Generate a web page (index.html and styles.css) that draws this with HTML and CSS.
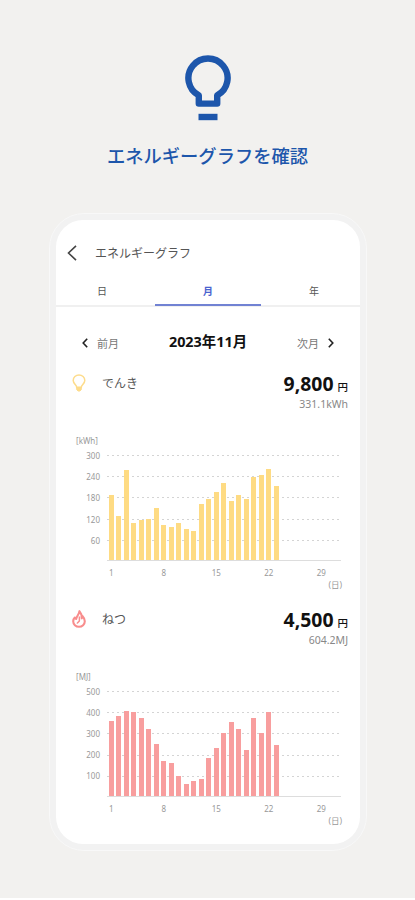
FILE: index.html
```
<!doctype html>
<html lang="ja">
<head>
	<meta charset="utf-8">
	<meta name="viewport" content="width=device-width, initial-scale=1.0">
	<title>エネルギーグラフ</title>
	<link rel="stylesheet" href="styles.css">
</head>
<body>
	<div class="hero">
		<svg class="hero-icon" width="46" height="66" viewBox="0 0 46 66" fill="none" stroke="currentColor" stroke-width="6.4">
			<path d="M13.8 48.6V40.4A19.6 19.6 0 1 1 32.2 40.4V48.6Z" stroke-linejoin="round"/>
			<path d="M13.5 62H32.5"/>
		</svg>
		<h1>エネルギーグラフを確認</h1>
	</div>

	<div class="phone">
		<div class="screen">
			<header class="bar">
				<svg width="10" height="16" viewBox="0 0 10 16" fill="none" stroke="#444" stroke-width="1.6"><path d="M9 .8 1.5 8 9 15.2"/></svg>
				<span>エネルギーグラフ</span>
			</header>
			<nav class="tabs">
				<span class="tab">日</span>
				<span class="tab tab-active">月</span>
				<span class="tab">年</span>
			</nav>

			<div class="month">
				<svg width="6" height="10" viewBox="0 0 6 10" fill="none" stroke="#222" stroke-width="1.6"><path d="M5.2 .8 1.2 5 5.2 9.2"/></svg>
				<span class="month-link">前月</span>
				<strong>2023年11月</strong>
				<span class="month-link">次月</span>
				<svg width="6" height="10" viewBox="0 0 6 10" fill="none" stroke="#222" stroke-width="1.6"><path d="M.8 .8 4.8 5 .8 9.2"/></svg>
			</div>

			<section class="energy power">
				<div class="summary">
					<svg class="icon" width="14" height="18" viewBox="0 0 14 18" fill="none" stroke="#fddc8c" stroke-width="1.5">
						<path d="M4.7 13.2C4.7 11 1.2 9.7 1.2 6.5A5.7 5.5 0 0 1 12.8 6.5C12.8 9.7 9.3 11 9.3 13.2Z"/>
						<path d="M4.7 13V15.5L6 17H8L9.3 15.5V13" fill="#fddc8c" stroke-width="1"/>
					</svg>
					<h2>でんき</h2>
					<div class="amount">
						<p class="price">9,800<small>円</small></p>
						<p class="usage">331.1kWh</p>
					</div>
				</div>
				<div class="unit">[kWh]</div>
				<div class="chart">
					<div class="scale"><span>300</span><span>240</span><span>180</span><span>120</span><span>60</span></div>
					<div class="plot">
						<i style="height:65px"></i><i style="height:44px"></i><i style="height:90px"></i><i style="height:37px"></i><i style="height:40px"></i><i style="height:41px"></i><i style="height:52px"></i>
						<i style="height:35px"></i><i style="height:33px"></i><i style="height:37px"></i><i style="height:31px"></i><i style="height:29px"></i><i style="height:56px"></i><i style="height:61px"></i>
						<i style="height:68px"></i><i style="height:77px"></i><i style="height:59px"></i><i style="height:65px"></i><i style="height:61px"></i><i style="height:83px"></i><i style="height:85px"></i>
						<i style="height:91px"></i><i style="height:74px"></i>
					</div>
				</div>
				<div class="days"><span>1</span><span>8</span><span>15</span><span>22</span><span>29</span></div>
				<div class="day-unit">(日)</div>
			</section>

			<section class="energy heat">
				<div class="summary">
					<svg class="icon" width="14" height="18" viewBox="0 0 14 18" fill="none" stroke="#f88d8d" stroke-linejoin="round">
						<path d="M7.4 1.2C7.4 4.2 4.4 6 4.2 9L2.8 7.6C1.7 8.7 1.2 9.9 1.2 11.3A5.8 5.5 0 0 0 12.8 11.3C12.8 9.3 11.9 7.6 10.6 6.2L9.7 8.3C9.9 5.5 9 3 7.4 1.2Z" stroke-width="2.1"/>
						<path d="M7.4 6.5V10.5C7.4 12.4 5.4 12 5.2 13.6" stroke-width="1.5"/>
					</svg>
					<h2>ねつ</h2>
					<div class="amount">
						<p class="price">4,500<small>円</small></p>
						<p class="usage">604.2MJ</p>
					</div>
				</div>
				<div class="unit">[MJ]</div>
				<div class="chart">
					<div class="scale"><span>500</span><span>400</span><span>300</span><span>200</span><span>100</span></div>
					<div class="plot">
						<i style="height:75px"></i><i style="height:80px"></i><i style="height:85px"></i><i style="height:84px"></i><i style="height:78px"></i><i style="height:67px"></i><i style="height:52px"></i>
						<i style="height:35px"></i><i style="height:33px"></i><i style="height:20px"></i><i style="height:12px"></i><i style="height:15px"></i><i style="height:17px"></i><i style="height:38px"></i>
						<i style="height:48px"></i><i style="height:63px"></i><i style="height:74px"></i><i style="height:67px"></i><i style="height:46px"></i><i style="height:78px"></i><i style="height:63px"></i>
						<i style="height:84px"></i><i style="height:51px"></i>
					</div>
				</div>
				<div class="days"><span>1</span><span>8</span><span>15</span><span>22</span><span>29</span></div>
				<div class="day-unit">(日)</div>
			</section>
		</div>
	</div>
</body>
</html>
```
FILE: styles.css
```
* { box-sizing: border-box; }

:root {
	--blue: #1d56ab;
	--blue-tab: #4a63cf;
	--page: #f2f1ef;
}

html {
	background: #fff;
}

body {
	height: 898px;
	margin: 0;
	padding-top: 55px;
	overflow: hidden;
	background: var(--page);
	color: #111;
	font-family: "Noto Sans", "Noto Sans CJK JP", sans-serif;
}

h1, h2, p {
	margin: 0;
}

svg {
	display: block;
	flex: none;
}

.hero {
	height: 158px;
	color: var(--blue);
}

.hero-icon {
	margin: 0 auto;
}

.hero h1 {
	margin-top: 22px;
	font-size: 18.3px;
	font-weight: 500;
	line-height: 26px;
	text-align: center;
	white-space: nowrap;
}

/* Device */
.phone {
	width: 318px;
	height: 638px;
	margin-left: 49px;
	padding: 6px;
	border: 1px solid #f8f8f8;
	border-radius: 35px;
	background: #f2f2f2;
}

.screen {
	height: 624px;
	border-radius: 27px;
	background: #fff;
	overflow: hidden;
}

.bar {
	display: flex;
	align-items: center;
	gap: 18px;
	height: 56px;
	padding: 10px 0 0 11px;
	color: #555;
	font-size: 12px;
}

.tabs {
	display: grid;
	grid-template-columns: 99px 106px 99px;
	height: 31px;
	border-bottom: 2px solid #f0f0f0;
	color: #555;
	font-size: 10px;
	line-height: 30px;
	text-align: center;
}

.tab:first-child {
	padding-right: 7px;
}

.tab:last-child {
	padding-left: 7px;
}

.tab-active {
	height: 30px;
	border-bottom: 2px solid #7182d3;
	color: var(--blue-tab);
	font-weight: 700;
}

/* Month switcher */
.month {
	display: flex;
	align-items: center;
	height: 24px;
	margin: 24px 26px 0;
}

.month-link {
	margin: 0 9px;
	color: #777;
	font-size: 11px;
}

.month strong {
	flex: 1;
	font-size: 14.4px;
	font-weight: 700;
	line-height: 20px;
	margin-top: -2px;
	text-align: center;
	white-space: nowrap;
}

/* Energy blocks */
.energy {
	height: 235.5px;
	padding: 15px 12px 0 16px;
}

.summary {
	display: flex;
	height: 64px;
}

.icon {
	margin-top: 4px;
}

.summary h2 {
	margin-left: 16px;
	color: #555;
	font-size: 12px;
	font-weight: 400;
	line-height: 27px;
}

.amount {
	margin-left: auto;
	text-align: right;
}

.price {
	font-size: 19.4px;
	font-weight: 700;
	line-height: 27px;
}

.price small {
	margin-left: 4px;
	font-size: 10.5px;
	font-weight: 500;
	line-height: 1;
}

.usage {
	color: #888;
	font-size: 10.5px;
	line-height: 15px;
}

.unit {
	padding-left: 4px;
	color: #999;
	font-size: 8px;
	line-height: 13px;
}

/* Graph */
.chart {
	display: flex;
	gap: 7px;
	margin-top: 8px;
}

.scale {
	width: 28px;
	margin-top: -6px;
	color: #999;
	font-size: 8px;
	text-align: right;
}

.scale span {
	display: block;
	height: 21.2px;
	line-height: 13px;
}

.plot {
	display: grid;
	grid-template-columns: repeat(31, 7.5px);
	align-items: end;
	width: 234px;
	height: 106px;
	border-bottom: 1px solid #ddd;
	/* dash gaps painted over the grid lines in the page white */
	background:
		repeating-linear-gradient(90deg, transparent 0 2.5px, #fff 2.5px 5px),
		repeating-linear-gradient(#d4d4d4 0 1px, transparent 1px 21.2px);
}

.plot i {
	width: 5px;
	margin-left: 1.6px;
	background: #fedb83;
}

.heat .plot i {
	background: #f89e9e;
}

.days {
	display: grid;
	grid-template-columns: repeat(5, 52.5px);
	margin: 6px 0 0 13px;
	color: #999;
	font-size: 8px;
	line-height: 12px;
	text-align: center;
}

.day-unit {
	padding-right: 6px;
	color: #999;
	font-size: 8.5px;
	line-height: 12px;
	text-align: right;
}
```
